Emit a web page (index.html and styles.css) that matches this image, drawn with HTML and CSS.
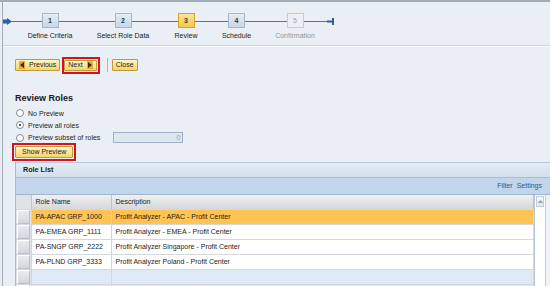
FILE: index.html
```html
<!DOCTYPE html>
<html lang="en">
<head>
    <meta charset="UTF-8">
    <title>Review Roles</title>
    <link rel="stylesheet" href="styles.css">
</head>
<body>
    <div class="frame">
        <div class="steps">
            <svg class="cap" width="9" height="7" viewBox="0 0 9 7"><rect x="0" y="1.5" width="4" height="4" fill="#2d5f9a"/><polygon points="4,0 9,3.5 4,7" fill="#2d5f9a"/></svg>
            <div class="seg s0"></div>
            <div class="step w1"><div class="track"><span class="num">1</span></div><div class="lbl">Define Criteria</div></div>
            <div class="step w2"><div class="track"><span class="num">2</span></div><div class="lbl">Select Role Data</div></div>
            <div class="step w3"><div class="track"><span class="num active">3</span></div><div class="lbl">Review</div></div>
            <div class="step w4"><div class="track"><span class="num">4</span></div><div class="lbl">Schedule</div></div>
            <div class="step w5 off"><div class="track"><span class="num">5</span></div><div class="lbl">Confirmation</div></div>
            <div class="seg s6"></div>
            <svg class="cap" width="7" height="7" viewBox="0 0 7 7"><rect x="0" y="2.5" width="5" height="2" fill="#2d5f9a"/><rect x="5" y="0" width="2" height="7" fill="#2d5f9a"/></svg>
        </div>

        <div class="actions">
            <button class="btn"><span class="ico"><svg width="4" height="6" viewBox="0 0 4 6"><polygon points="4,0 0,3 4,6" fill="#3a2a10"/></svg></span>Previous</button>
            <span class="hl"><button class="btn">Next<span class="ico right"><svg width="4" height="6" viewBox="0 0 4 6"><polygon points="0,0 4,3 0,6" fill="#3a2a10"/></svg></span></button></span>
            <span class="sep"></span>
            <button class="btn">Close</button>
        </div>

        <div class="content">
            <h2>Review Roles</h2>
            <div class="opt"><span class="radio"></span>No Preview</div>
            <div class="opt"><span class="radio on"></span>Preview all roles</div>
            <div class="opt"><span class="radio"></span>Preview subset of roles<span class="field">0</span></div>
            <span class="hl big"><button class="btn">Show Preview</button></span>

            <div class="panel">
                <div class="panel-head">Role List</div>
                <div class="panel-tools"><a>Filter</a><a>Settings</a></div>
                <div class="grid">
                    <table class="tbl">
                        <colgroup><col class="c-sel"><col class="c-name"><col></colgroup>
                        <tr class="head"><th class="sel"></th><th>Role Name</th><th>Description</th></tr>
                        <tr class="picked"><td class="sel"><span></span></td><td>PA-APAC GRP_1000</td><td>Profit Analyzer - APAC - Profit Center</td></tr>
                        <tr><td class="sel"><span></span></td><td>PA-EMEA GRP_1111</td><td>Profit Analyzer - EMEA - Profit Center</td></tr>
                        <tr><td class="sel"><span></span></td><td>PA-SNGP GRP_2222</td><td>Profit Analyzer Singapore - Profit Center</td></tr>
                        <tr><td class="sel"><span></span></td><td>PA-PLND GRP_3333</td><td>Profit Analyzer Poland - Profit Center</td></tr>
                        <tr class="empty"><td class="sel"><span></span></td><td></td><td></td></tr>
                        <tr class="empty"><td class="sel"><span></span></td><td></td><td></td></tr>
                    </table>
                    <div class="scroll"><span class="up"><svg width="5" height="3" viewBox="0 0 5 3"><polygon points="0,3 2.5,0 5,3" fill="#8a9aac"/></svg></span></div>
                </div>
            </div>
        </div>
    </div>
</body>
</html>
```

FILE: styles.css
```css
body {
    margin: 0;
    height: 286px;
    box-sizing: border-box;
    overflow: hidden;
    background: #e9eff5;
    border-top: 2px solid #a3adb8;
    font-family: "Liberation Sans", Arial, sans-serif;
    font-size: 7px;
    color: #1c1c1c;
}
.frame {
    margin-left: 2px;
    border-left: 1px solid #a2acb7;
    height: 100%;
    overflow: hidden;
}
.steps {
    display: flex;
    align-items: flex-start;
    height: 44px;
    padding-top: 11px;
    box-sizing: border-box;
    border-bottom: 1px solid #cdd6df;
    box-shadow: 0 1px 0 #f8fafc;
}
.cap {
    margin-top: 5px;
    flex-shrink: 0;
}
.seg {
    height: 15px;
    background: linear-gradient(to bottom, transparent 8px, #4f77a6 8px, #4f77a6 9px, transparent 9px);
}
.s0 { width: 8px; }
.s6 { width: 4px; }
.step {
    display: flex;
    flex-direction: column;
    align-items: center;
}
.w1 { width: 60px; }
.w2 { width: 86px; }
.w3 { width: 40px; }
.w4 { width: 61px; }
.w5 { width: 56px; }
.track {
    width: 100%;
    height: 15px;
    display: flex;
    justify-content: center;
    background: linear-gradient(to bottom, transparent 8px, #4f77a6 8px, #4f77a6 9px, transparent 9px);
}
.num {
    width: 15px;
    height: 13px;
    line-height: 13px;
    border: 1px solid #a3b8cf;
    background: linear-gradient(#e6edf5, #c8d6e6);
    text-align: center;
    font-weight: bold;
    color: #1f3550;
}
.num.active {
    border-color: #d9a12c;
    background: linear-gradient(#fde49a, #f6c84e);
    color: #4a3308;
}
.lbl {
    margin-top: 4px;
    white-space: nowrap;
    color: #222;
}
.off .num {
    border-color: #c4cbd2;
    background: #edf0f3;
    color: #9aa3ac;
    font-weight: normal;
}
.off .lbl { color: #8e979f; }

.actions {
    display: flex;
    align-items: center;
    padding: 11px 0 0 12px;
    height: 16px;
}
.btn {
    display: inline-flex;
    align-items: center;
    height: 12px;
    padding: 0 3px;
    border: 1px solid #bf9a3f;
    border-radius: 1px;
    background: linear-gradient(#fff5c4, #f6d56a);
    font-family: inherit;
    font-size: 7px;
    color: #1c1c1c;
    line-height: 10px;
    cursor: pointer;
}
.ico {
    display: inline-flex;
    align-items: center;
    justify-content: center;
    width: 6px;
    height: 8px;
    margin-right: 4px;
    background: #e9a93a;
}
.ico.right {
    margin-right: 0;
    margin-left: 4px;
}
.actions > .btn + .hl { margin-left: 2px; }
.hl {
    display: inline-flex;
    border: 2px solid #d3141e;
    padding: 1px 1px 1px 0;
}
.hl .btn { height: 11px; }
.sep {
    width: 1px;
    height: 14px;
    background: #a9bccf;
    margin: 0 4px 0 7px;
}

.content {
    padding-left: 12px;
}
h2 {
    margin: 20px 0 3px;
    font-size: 9px;
    line-height: 11px;
    font-weight: bold;
    color: #1a1a1a;
}
.opt {
    display: flex;
    align-items: center;
    height: 12.3px;
    padding-left: 1px;
}
.radio {
    width: 8px;
    height: 8px;
    box-sizing: border-box;
    border: 1px solid #7f8b98;
    border-radius: 50%;
    background: #fff;
    margin-right: 4px;
    display: inline-flex;
    align-items: center;
    justify-content: center;
}
.radio.on::after {
    content: "";
    width: 2px;
    height: 2px;
    border-radius: 50%;
    background: #222;
}
.field {
    width: 66px;
    height: 9px;
    border: 1px solid #a0b1c3;
    background: #dde7f0;
    margin-left: 13px;
    text-align: right;
    padding-right: 2px;
    line-height: 9px;
    color: #9aa4ae;
}
.hl.big {
    margin: -1px 0 0 -3px;
    padding: 1px;
}
.hl.big .btn {
    height: 12px;
    padding: 0 6px;
}

.panel {
    margin-top: 1px;
    border-left: 1px solid #a9bdd2;
}
.panel-head {
    height: 14px;
    line-height: 14px;
    padding-left: 7px;
    border-top: 1px solid #b8c9db;
    background: linear-gradient(#e3ebf4, #d3e0ec);
    font-weight: bold;
    font-size: 7.2px;
}
.panel-tools {
    display: flex;
    justify-content: flex-end;
    gap: 4px;
    height: 16px;
    line-height: 15px;
    padding-right: 8px;
    border-top: 1px solid #a9bfd6;
    background: #c2d5ea;
}
.panel-tools a {
    color: #2e5a95;
}
.grid {
    display: flex;
    padding-right: 4px;
    background: #eef3f8;
    border-top: 1px solid #9fb6cf;
}
.tbl {
    flex: 1;
    border-collapse: collapse;
    table-layout: fixed;
    background: #fff;
}
.c-sel { width: 15px; }
.c-name { width: 80px; }
.tbl th, .tbl td {
    height: 14px;
    padding: 0 0 0 4px;
    border-right: 1px solid #cfd6dd;
    border-bottom: 1px solid #d2d8de;
    text-align: left;
    font-weight: normal;
    white-space: nowrap;
    overflow: hidden;
}
.tbl th {
    background: linear-gradient(#f0f0f0, #d5d7da);
    border-right-color: #bcc3ca;
}
.tbl .sel {
    padding: 0;
    background: #dfe3e7;
}
.tbl td.sel span {
    display: block;
    height: 12px;
    margin: 0 1px;
    border: 1px solid #b9c0c7;
    border-top-color: #fff;
    border-left-color: #fff;
    background: linear-gradient(#e9ebee, #d3d7dc);
}
.picked td { background: #ffc454; }
.empty td { background: #dde9f4; }
.scroll {
    width: 10px;
    border-left: 1px solid #bcc6d0;
    border-right: 1px solid #c5ced8;
    background: #fff;
}
.up {
    display: flex;
    align-items: center;
    justify-content: center;
    height: 9px;
    margin: 1px;
    border: 1px solid #c3ccd6;
    background: linear-gradient(#f7f9fb, #e1e7ee);
}
```
